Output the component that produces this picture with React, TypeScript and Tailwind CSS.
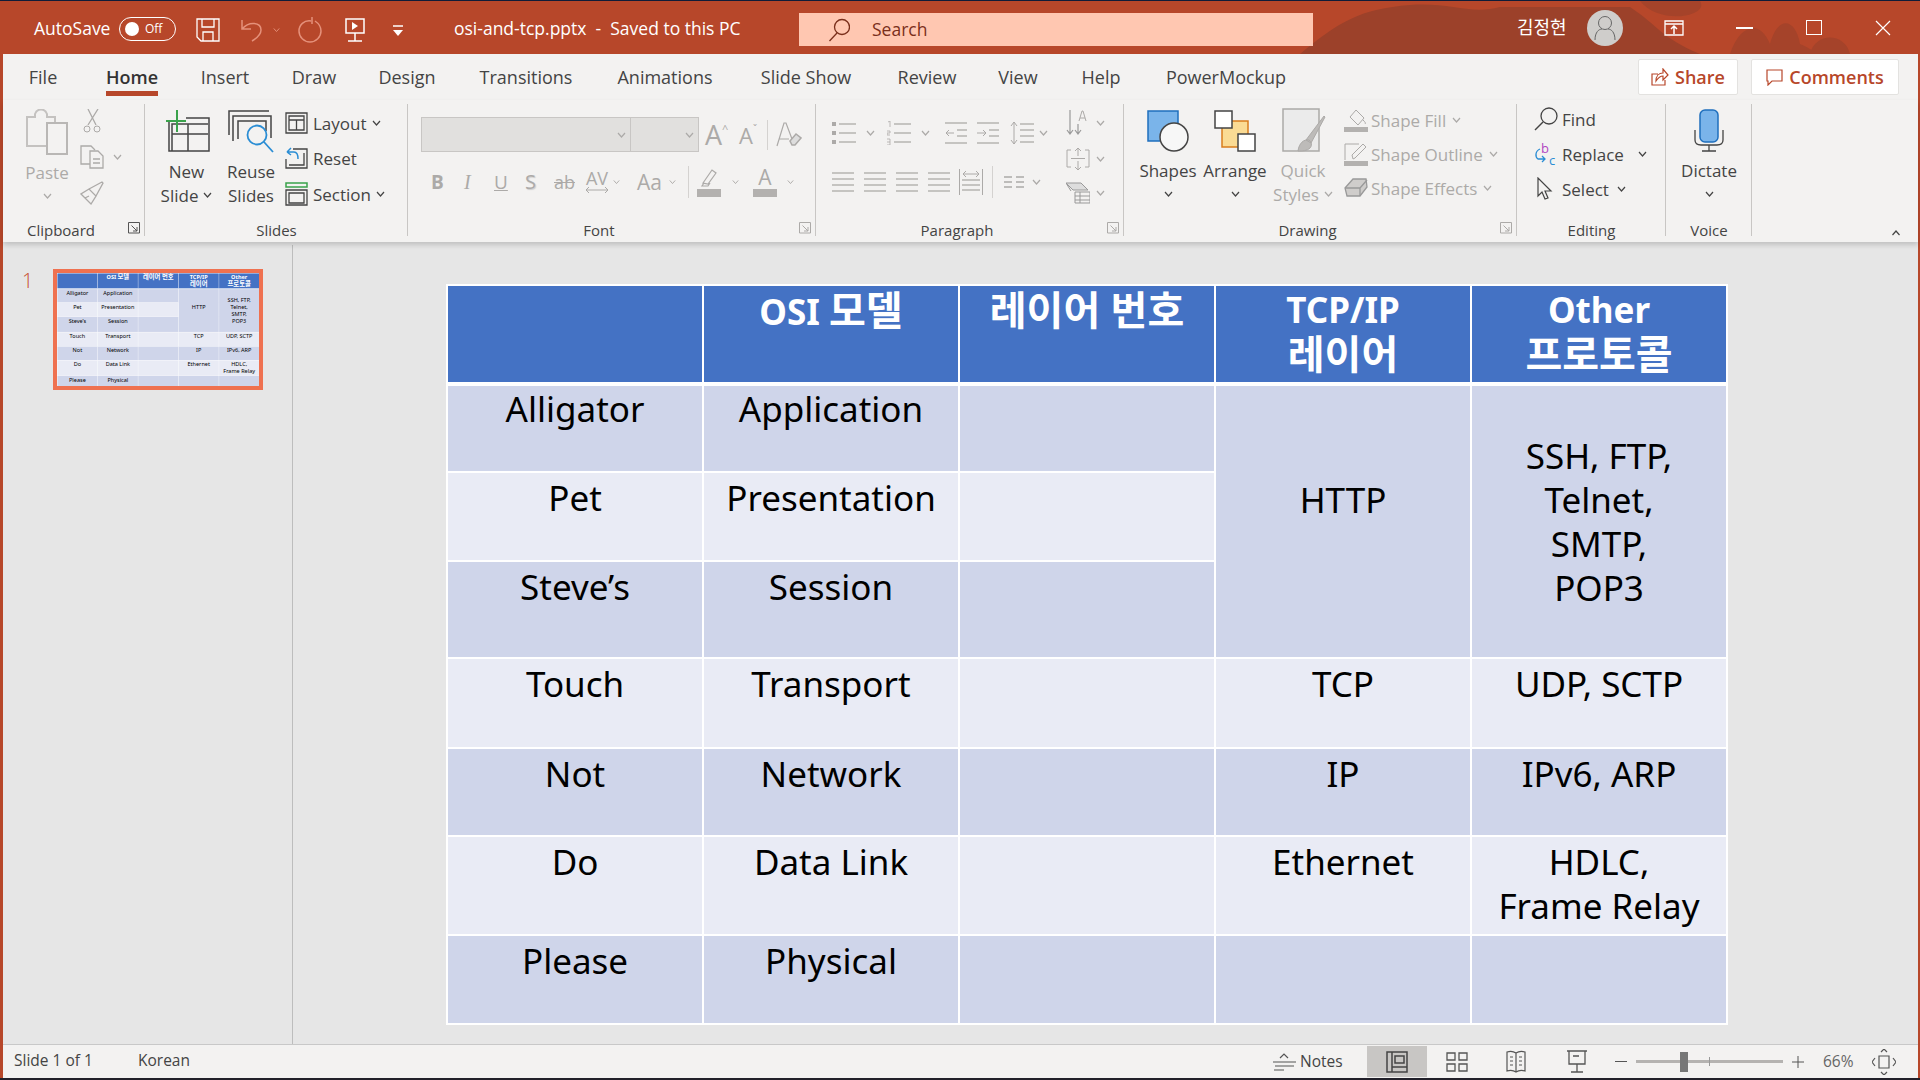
import type { ReactNode } from 'react';

const UI = "font-['Open_Sans','Noto_Sans_CJK_KR',sans-serif]";
const OFF = '#acaaa8';
const ON = '#444444';

function Chev({ c = ON, w = 9, up = false }: { c?: string; w?: number; up?: boolean }) {
  return (
    <svg width={w} height="6" viewBox="0 0 9 6" fill="none" stroke={c} strokeWidth="1.2" className="shrink-0">
      <path d={up ? 'M1 5l3.5-4L8 5' : 'M1 1l3.5 4L8 1'} />
    </svg>
  );
}

function Ico({ w, h, children, className = '' }: { w: number; h: number; children: ReactNode; className?: string }) {
  return (
    <svg width={w} height={h} viewBox={`0 0 ${w} ${h}`} fill="none" className={`shrink-0 ${className}`}>
      {children}
    </svg>
  );
}

// big ribbon button: icon on top, up to two lines of text, chevron inline or on own line
function Big({ icon, lines, w, off = false, inlineChev = false }: { icon: ReactNode; lines: string[]; w: string; off?: boolean; inlineChev?: boolean }) {
  const c = off ? OFF : ON;
  return (
    <div className={`flex flex-col items-center shrink-0 ${w}`}>
      <div className="h-[54px] flex items-center justify-center">{icon}</div>
      {lines.map((l, i) => (
        <div key={l} className="h-[24px] flex items-center gap-[5px] whitespace-nowrap" style={{ color: c }}>
          {l}
          {inlineChev && i === lines.length - 1 && <Chev c={c} />}
        </div>
      ))}
      {!inlineChev && lines.length === 1 && (
        <div className="h-[24px] flex items-center"><Chev c={c} /></div>
      )}
    </div>
  );
}

function Launcher({ off = false }: { off?: boolean }) {
  const c = off ? OFF : '#555';
  return (
    <Ico w={12} h={12}>
      <path d="M.5 11V.5H11.500V11H.5" stroke={c} />
      <path d="M3.500 3.500L9 9M5 9h4V5" stroke={c} />
    </Ico>
  );
}

function Group({ w, label, launcher, launcherOff, children, last }: { w: string; label: string; launcher?: boolean; launcherOff?: boolean; children: ReactNode; last?: boolean }) {
  return (
    <div className={`relative shrink-0 flex flex-col h-[142px] ${w}`}>
      <div className="h-[118px] flex">{children}</div>
      <div className="flex items-center h-[24px] text-[#444] text-[15px]">
        <div className={`flex-1 text-center ${launcher ? 'pr-[26px]' : ''}`}>{label}</div>
      </div>
      {launcher && (
        <div className="absolute right-[5px] bottom-[8px]"><Launcher off={launcherOff} /></div>
      )}
      {!last && <div className="absolute right-0 top-[4px] bottom-[6px] w-px bg-[#c8c6c4]" />}
    </div>
  );
}

const rows: { cells: (string | null)[]; band: string; h: string }[] = [
  { cells: ['Alligator', 'Application', '', 'HTTP', 'SSH'], band: 'bg-[#cfd5ea]', h: 'h-[88px]' },
  { cells: ['Pet', 'Presentation', '', null, null], band: 'bg-[#e9ebf5]', h: 'h-[89px]' },
  { cells: ['Steve’s', 'Session', '', null, null], band: 'bg-[#cfd5ea]', h: 'h-[97px]' },
  { cells: ['Touch', 'Transport', '', 'TCP', 'UDP, SCTP'], band: 'bg-[#e9ebf5]', h: 'h-[90px]' },
  { cells: ['Not', 'Network', '', 'IP', 'IPv6, ARP'], band: 'bg-[#cfd5ea]', h: 'h-[88px]' },
  { cells: ['Do', 'Data Link', '', 'Ethernet', 'HDLC,|Frame Relay'], band: 'bg-[#e9ebf5]', h: 'h-[99px]' },
  { cells: ['Please', 'Physical', '', '', ''], band: 'bg-[#cfd5ea]', h: 'h-[89px]' },
];

function Ko({ children }: { children: ReactNode }) {
  return <span className="text-[40px]">{children}</span>;
}

function SlideTable() {
  const th = 'w-[256px] border-2 border-b-4 border-white bg-[#4472c4] align-top pt-[2px] font-bold text-white';
  return (
    <table className="table-fixed border-collapse w-[1280px] text-center text-[35px] leading-[44px] font-['Noto_Sans','Noto_Sans_CJK_KR',sans-serif]">
      <thead>
        <tr className="h-[99px]">
          <th className={th}></th>
          <th className={th}>OSI <Ko>모델</Ko></th>
          <th className={th}><Ko>레이어 번호</Ko></th>
          <th className={th}>TCP/IP<br /><Ko>레이어</Ko></th>
          <th className={th}>Other<br /><Ko>프로토콜</Ko></th>
        </tr>
      </thead>
      <tbody>
        {rows.map((r, i) => (
          <tr key={i} className={r.h}>
            {r.cells.map((c, j) => {
              if (c === null) return null;
              if (i === 0 && j === 3)
                return <td key={j} rowSpan={3} className="border-2 border-white bg-[#cfd5ea] align-middle text-black">HTTP<br />&nbsp;</td>;
              if (i === 0 && j === 4)
                return <td key={j} rowSpan={3} className="border-2 border-white bg-[#cfd5ea] align-middle text-black">SSH, FTP,<br />Telnet,<br />SMTP,<br />POP3</td>;
              return (
                <td key={j} className={`border-2 border-white align-top text-black ${i === 0 ? 'pt-[1px]' : 'pt-[3px]'} ${r.band}`}>
                  {c.split('|').map((t, k) => (k ? <span key={k}><br />{t}</span> : <span key={k}>{t}</span>))}
                </td>
              );
            })}
          </tr>
        ))}
      </tbody>
    </table>
  );
}

function SmallRow({ icon, label, off, chev, gap = 'gap-[5px]', chevGap = 'ml-0' }: { icon: ReactNode; label: string; off?: boolean; chev?: boolean; gap?: string; chevGap?: string }) {
  const c = off ? OFF : ON;
  return (
    <div className={`flex items-center whitespace-nowrap ${gap}`} style={{ color: c }}>
      {icon}
      <span>{label}</span>
      {chev && <span className={chevGap}><Chev c={c} /></span>}
    </div>
  );
}

function Lines({ x, ys, w, c = OFF }: { x: number; ys: number[]; w: number; c?: string }) {
  return (
    <>
      {ys.map((y) => (
        <path key={y} d={`M${x} ${y}h${w}`} stroke={c} strokeWidth="1.300" />
      ))}
    </>
  );
}

const tabs = [
  ['File', 'w-[58px] ml-[11px]'],
  ['Home', 'w-[120px]'],
  ['Insert', 'w-[66px]'],
  ['Draw', 'w-[112px]'],
  ['Design', 'w-[74px]'],
  ['Transitions', 'w-[164px]'],
  ['Animations', 'w-[114px]'],
  ['Slide Show', 'w-[168px]'],
  ['Review', 'w-[74px]'],
  ['View', 'w-[108px]'],
  ['Help', 'w-[58px]'],
  ['PowerMockup', 'w-[192px]'],
];

export default function App() {
  return (
    <div className={`w-screen h-screen overflow-hidden flex flex-col bg-[#b7472a] border-t border-[#101c38] ${UI}`}>
      {/* title bar */}
      <div className="relative h-[53px] shrink-0 flex items-center bg-[#b7472a] text-white text-[17.500px] pl-[34px] pt-[4px]">
        <svg className="absolute right-0 top-0" width="620" height="53" viewBox="0 0 620 53">
          <path d="M0 53C40 20 60 8 110 4c40-3 60 10 90 2h130c30 20 30 30 70 47z" fill="#9c412a" />
          <path d="M430 53c10-30 30-35 40-10 8-30 26-25 30 0 10 4 14 8 18 10zM510 53c5-22 35-22 40 0zM340 0h60c10 15-40 25-60 0z" fill="#a5432a" />
        </svg>
        <span className="relative w-[85px] whitespace-nowrap -mt-[2px]">AutoSave</span>
        <div className="relative w-[57px] h-[24px] rounded-full border border-white flex items-center pl-[5px] gap-[6px] text-[12px] -mt-[2px]">
          <span className="w-[14px] h-[14px] rounded-full bg-white"></span>Off
        </div>
        <Ico w={24} h={24} className="relative ml-[20px]">
          <path d="M1 1h22v22H5l-4-4zM6 1v8h12V1M7 23v-9h10v9" stroke="#fff" strokeWidth="1.300" />
        </Ico>
        <Ico w={24} h={24} className="relative ml-[20px]">
          <path d="M2 2v9h9M2 11C9 3 21 4 21 12c0 5-4 8-9 11" stroke="#e5917b" strokeWidth="1.500" />
        </Ico>
        <span className="relative ml-[9px]"><Chev c="#e5917b" w={7} /></span>
        <Ico w={24} h={26} className="relative ml-[18px]">
          <path d="M13 4C6 3 1 8 1 14c0 6 5 11 11 11s11-5 11-11c0-5-3-8-6-10M14 0v7" stroke="#e5917b" strokeWidth="1.500" />
        </Ico>
        <Ico w={24} h={24} className="relative ml-[21px]">
          <path d="M3 1h18v14H3zM12 15v8M5 23h14" stroke="#fff" strokeWidth="1.500" />
          <path d="M9 4l6 4-6 4z" fill="#fff" />
        </Ico>
        <Ico w={14} h={14} className="relative ml-[24px]">
          <path d="M2 3h10" stroke="#fff" strokeWidth="1.500" />
          <path d="M2 7h10l-5 6z" fill="#fff" />
        </Ico>
        <span className="relative ml-[49px] w-[345px] whitespace-nowrap -mt-[2px]">osi-and-tcp.pptx&nbsp; -&nbsp; Saved to this PC</span>
        <div className="relative h-[33px] w-[514px] bg-[#ffc7b1] flex items-center pl-[29px] text-[#7a2f1b]">
          <Ico w={22} h={24}>
            <circle cx="14" cy="9" r="7.500" stroke="#7a2f1b" strokeWidth="1.300" />
            <path d="M9 15L1.500 23" stroke="#7a2f1b" strokeWidth="1.300" />
          </Ico>
          <span className="ml-[22px]">Search</span>
        </div>
        <span className="relative ml-[204px] w-[62px] whitespace-nowrap text-[18px] -mt-[4px]">김정현</span>
        <div className="relative w-[36px] h-[36px] rounded-full bg-[#cfcdcb] flex items-center justify-center ml-[8px] -mt-[4px]">
          <Ico w={22} h={26}>
            <circle cx="11" cy="8" r="6.500" stroke="#666" />
            <path d="M1 25c0-8 4-11 7-11M21 25c0-8-4-11-7-11" stroke="#666" />
          </Ico>
        </div>
        <Ico w={20} h={16} className="relative ml-[41px] -mt-[4px]">
          <path d="M1 1h18v14H1zM1 4h18" stroke="#fff" strokeWidth="1.300" />
          <path d="M10 14V7M7 9l3-3 3 3" stroke="#fff" strokeWidth="1.500" />
        </Ico>
        <div className="relative ml-[52px] w-[17px] h-[2px] bg-white -mt-[4px]"></div>
        <div className="relative ml-[53px] w-[16px] h-[15px] border border-white -mt-[4px]"></div>
        <Ico w={16} h={16} className="relative ml-[53px] -mt-[4px]">
          <path d="M1 1l14 14M15 1L1 15" stroke="#fff" strokeWidth="1.200" />
        </Ico>
      </div>

      <div className="flex-1 min-h-0 flex flex-col ml-[3px] mr-[2px]">
        {/* tab row */}
        <div className="h-[46px] shrink-0 bg-[#f3f2f1] flex items-center text-[#444] text-[18px]">
          {tabs.map(([t, w]) => (
            <div key={t} className={`h-full flex items-center justify-center shrink-0 whitespace-nowrap ${w}`}>
              {t === 'Home' ? (
                <span className="relative h-full flex items-center font-semibold text-[#333]">
                  Home
                  <span className="absolute left-0 right-0 bottom-[4px] h-[5px] bg-[#b7472a]"></span>
                </span>
              ) : t}
            </div>
          ))}
          <div className="ml-auto flex items-center gap-[13px] mr-[19px]">
            <div className="w-[100px] h-[36px] bg-white border border-[#e3e2e0] rounded-[2px] flex items-center justify-center gap-[6px] text-[#b7472a] font-semibold">
              <Ico w={18} h={18}>
                <path d="M7 6H1v11h13v-5M5 13c0-5 3-8 7-8V1l5 6-5 5V8c-3 0-5 2-7 5z" stroke="#b7472a" strokeWidth="1.200" />
              </Ico>
              Share
            </div>
            <div className="w-[148px] h-[36px] bg-white border border-[#e3e2e0] rounded-[2px] flex items-center justify-center gap-[6px] text-[#b7472a] font-semibold">
              <Ico w={17} h={17}>
                <path d="M1 1h15v11H6l-4 4v-4H1z" stroke="#b7472a" strokeWidth="1.200" />
              </Ico>
              Comments
            </div>
          </div>
        </div>

        {/* ribbon */}
        <div className="relative z-10 h-[142px] shrink-0 bg-[#f3f2f1] flex text-[17px] leading-none shadow-[0_3px_5px_rgba(0,0,0,0.16)]">
          <Group w="w-[142px]" label="Clipboard" launcher>
            <div className="pl-[22px] pt-[9px] flex">
              <div className="w-[44px] flex flex-col items-center" style={{ color: OFF }}>
                <Ico w={42} h={46}>
                  <path d="M22 37H1V8h8V5c2-6 10-6 12 0v3h8v7" stroke="#c4c2c0" strokeWidth="2" />
                  <path d="M21 14h20v31H21z" fill="#f3f2f1" stroke="#b9b7b5" strokeWidth="2" />
                </Ico>
                <div className="h-[24px] mt-[5px] flex items-center">Paste</div>
                <div className="h-[24px] flex items-center"><Chev c={OFF} /></div>
              </div>
              <div className="ml-[11px] flex flex-col gap-[12px]">
                <Ico w={24} h={24}>
                  <path d="M8 0l8 16M18 0L8 16" stroke={OFF} strokeWidth="1.300" />
                  <circle cx="7" cy="20" r="3" stroke={OFF} /><circle cx="17" cy="20" r="3" stroke={OFF} />
                </Ico>
                <div className="flex items-center gap-[9px]">
                  <Ico w={24} h={24}>
                    <path d="M10 19H1V1h10l4 4" stroke={OFF} strokeWidth="1.300" />
                    <path d="M10 6h8l5 5v12H10zM13 14h7M13 18h7" stroke={OFF} strokeWidth="1.300" />
                  </Ico>
                  <Chev c={OFF} />
                </div>
                <Ico w={24} h={24}>
                  <path d="M1 13l10 10 5-8-7-7zM9 8l13-7 1 1-7 13M5 17l4-2" stroke={OFF} strokeWidth="1.300" />
                </Ico>
              </div>
            </div>
          </Group>

          <Group w="w-[263px]" label="Slides">
            <div className="pl-[18px] pt-[5px] flex">
              <Big
                w="w-[47px]"
                lines={['New', 'Slide']}
                inlineChev
                icon={
                  <Ico w={46} h={44}>
                    <path d="M5 12v29h40V8H22M8 41V14h36M24 14v27M8 24h36" stroke="#444" strokeWidth="1.500" />
                    <path d="M13 0v22M2 11h20" stroke="#3aa24b" strokeWidth="2" />
                  </Ico>
                }
              />
              <div className="ml-[18px]">
                <Big
                  w="w-[46px]"
                  lines={['Reuse', 'Slides']}
                  icon={
                    <Ico w={46} h={46}>
                      <path d="M1 26V2h40M5 32V7h38v22M10 30V12h28v10" stroke="#444" strokeWidth="1.500" />
                      <circle cx="29" cy="26" r="9.500" fill="#f3f2f1" stroke="#2a8dd4" strokeWidth="1.800" />
                      <path d="M36 33l9 10" stroke="#2a8dd4" strokeWidth="1.800" />
                    </Ico>
                  }
                />
              </div>
              <div className="ml-[11px] pt-[7px] flex flex-col gap-[13px]">
                <SmallRow chev label="Layout" icon={
                  <Ico w={23} h={22}><path d="M1 1h21v20H1zM4 4h15v14H4zM4 8h15M11.500 8v10" stroke="#444" strokeWidth="1.300" /></Ico>
                } />
                <SmallRow label="Reset" icon={
                  <Ico w={23} h={22}>
                    <path d="M8 2h14v19H1v-9M4 18h15V6" stroke="#444" strokeWidth="1.300" />
                    <path d="M2 5l4-4M2 5l4 3M2 5h7c3 0 4 2 4 7" stroke="#2a8dd4" strokeWidth="1.500" />
                  </Ico>
                } />
                <SmallRow chev label="Section" icon={
                  <Ico w={23} h={24}>
                    <path d="M1 1h21v4H1z" stroke="#3aa24b" strokeWidth="1.500" />
                    <path d="M1 8h21v15H1zM4 11h15v10H4z" stroke="#444" strokeWidth="1.300" />
                  </Ico>
                } />
              </div>
            </div>
          </Group>

          <Group w="w-[408px]" label="Font" launcher launcherOff>
            <div className="pl-[13px] pt-[17px] flex flex-col">
              <div className="flex items-center h-[35px]">
                <div className="w-[210px] h-[35px] bg-[#e1e0de] border border-[#c8c6c4] flex items-center justify-end pr-[4px]"><Chev c={OFF} /></div>
                <div className="w-[68px] h-[35px] bg-[#e1e0de] border border-[#c8c6c4] border-l-0 flex items-center justify-end pr-[4px]"><Chev c={OFF} /></div>
                <div className="flex items-start text-[27px] ml-[6px] w-[34px]" style={{ color: OFF }}>A<span className="text-[11px] mt-[2px]">^</span></div>
                <div className="flex items-start text-[22px] w-[28px]" style={{ color: OFF }}>A<span className="text-[10px]">ˇ</span></div>
                <div className="w-px h-[30px] bg-[#d4d2d0]"></div>
                <Ico w={26} h={26} className="ml-[8px]">
                  <path d="M1 24L8 1h2l6 16M3 17h10" stroke={OFF} strokeWidth="1.200" />
                  <path d="M14 19l6-7 5 4-6 7h-3z" stroke={OFF} strokeWidth="1.500" fill="#ddd" />
                </Ico>
              </div>
              <div className="flex items-center h-[26px] mt-[17px]" style={{ color: OFF }}>
                <span className="w-[40px] pl-[10px] font-bold text-[19px]">B</span>
                <span className="w-[33px] pl-[3px] italic font-['Liberation_Serif',serif] text-[20px]">I</span>
                <span className="w-[31px] underline text-[19px]">U</span>
                <span className="w-[29px] text-[20px] [text-shadow:1px_1px_1px_#ccc]">S</span>
                <span className="w-[29px] line-through text-[18px]">ab</span>
                <span className="flex flex-col items-center w-[28px] text-[18px] leading-[16px]">
                  AV
                  <Ico w={24} h={8}><path d="M1 4h22M1 4l3-3M1 4l3 3M23 4l-3-3M23 4l-3 3" stroke={OFF} /></Ico>
                </span>
                <span className="ml-[2px] w-[24px]"><Chev c={OFF} w={7} /></span>
                <span className="text-[21px] w-[32px]">Aa</span>
                <Chev c={OFF} w={7} />
                <div className="w-px h-[32px] bg-[#d4d2d0] ml-[12px]"></div>
                <div className="ml-[8px] flex flex-col items-center w-[24px] gap-[2px]">
                  <Ico w={20} h={19}><path d="M5 15l-2 3h6l2-3M4 15L13 2l4 3-8 11z" stroke={OFF} strokeWidth="1.200" /></Ico>
                  <div className="w-[24px] h-[8px] bg-[#b3b1af]"></div>
                </div>
                <span className="ml-[11px]"><Chev c={OFF} w={7} /></span>
                <div className="ml-[14px] flex flex-col items-center w-[24px]">
                  <span className="text-[21px] leading-[19px]">A</span>
                  <div className="w-[24px] h-[8px] bg-[#b3b1af] mt-[2px]"></div>
                </div>
                <span className="ml-[10px]"><Chev c={OFF} w={7} /></span>
              </div>
            </div>
          </Group>

          <Group w="w-[308px]" label="Paragraph" launcher launcherOff>
            <div className="pl-[16px] pt-[20px] flex flex-col">
              <div className="flex items-center h-[26px]">
                <Ico w={24} h={24}>
                  <Lines x={7} ys={[3, 12, 21]} w={17} />
                  <path d="M0 1h4v4H0zM0 10h4v4H0zM0 19h4v4H0z" fill={OFF} />
                </Ico>
                <span className="ml-[10px]"><Chev c={OFF} /></span>
                <Ico w={24} h={24} className="ml-[12px]">
                  <Lines x={7} ys={[3, 12, 21]} w={17} />
                  <path d="M1 1l2-1v6M0 10h3v2H0v2h3M0 18h3v6H0M0 21h3" stroke={OFF} strokeWidth=".8" />
                </Ico>
                <span className="ml-[10px]"><Chev c={OFF} /></span>
                <Ico w={24} h={24} className="ml-[14px]">
                  <Lines x={1} ys={[2, 22]} w={22} />
                  <Lines x={13} ys={[9, 15]} w={10} />
                  <path d="M10 12H2M5 9l-3 3 3 3" stroke={OFF} />
                </Ico>
                <Ico w={24} h={24} className="ml-[8px]">
                  <Lines x={1} ys={[2, 22]} w={22} />
                  <Lines x={13} ys={[9, 15]} w={10} />
                  <path d="M1 12h9M7 9l3 3-3 3" stroke={OFF} />
                </Ico>
                <Ico w={24} h={24} className="ml-[10px]">
                  <Lines x={10} ys={[3, 9, 15, 21]} w={14} />
                  <path d="M4 1v22M1 5l3-4 3 4M1 19l3 4 3-4" stroke={OFF} />
                </Ico>
                <span className="ml-[5px]"><Chev c={OFF} /></span>
              </div>
              <div className="flex items-center h-[24px] mt-[24px]">
                <Ico w={22} h={22}><Lines x={0} ys={[2, 8, 14, 20]} w={22} /></Ico>
                <Ico w={22} h={22} className="ml-[10px]"><Lines x={0} ys={[2, 8, 14, 20]} w={22} /></Ico>
                <Ico w={22} h={22} className="ml-[10px]"><Lines x={0} ys={[2, 8, 14, 20]} w={22} /></Ico>
                <Ico w={22} h={22} className="ml-[10px]"><Lines x={0} ys={[2, 8, 14, 20]} w={22} /></Ico>
                <Ico w={24} h={26} className="ml-[9px]">
                  <path d="M.5 0v26M23.500 0v26M4 5h16M4 5l3-3M4 5l3 3M20 5l-3-3M20 5l-3 3" stroke={OFF} />
                  <Lines x={3} ys={[11, 16, 21]} w={18} />
                </Ico>
                <div className="w-px h-[32px] bg-[#d4d2d0] ml-[9px]"></div>
                <Ico w={20} h={14} className="ml-[11px]">
                  <path d="M0 2h8M12 2h8M0 7h8M12 7h8M0 12h8M12 12h8" stroke={OFF} strokeWidth="1.300" />
                </Ico>
                <span className="ml-[8px]"><Chev c={OFF} /></span>
              </div>
            </div>
            <div className="ml-[18px] pt-[10px] flex flex-col gap-[11px]">
              <div className="flex items-center gap-[6px]">
                <Ico w={24} h={26}>
                  <path d="M4 0v24M1 20l3 4 3-4M12 14v10M9 20l3 4 3-4" stroke="#999" strokeWidth="1.200" />
                  <path d="M13 11l3-10h1l3 10M14 8h5" stroke={OFF} />
                </Ico>
                <Chev c={OFF} />
              </div>
              <div className="flex items-center gap-[6px]">
                <Ico w={24} h={24}>
                  <path d="M5 3H1v17h4M19 3h4v17h-4M5 11.500h14M12 1v8M9 4l3-3 3 3M12 14v9M9 20l3 3 3-3" stroke={OFF} />
                </Ico>
                <Chev c={OFF} />
              </div>
              <div className="flex items-center gap-[6px]">
                <Ico w={24} h={22}>
                  <path d="M0 1h15l7 7H7zM0 1l5 8" stroke="#999" fill="#ddd" />
                  <path d="M9 10h15v11H9zM9 14h15M9 18h15M14 10v11" stroke="#999" />
                </Ico>
                <Chev c={OFF} />
              </div>
            </div>
          </Group>

          <Group w="w-[393px]" label="Drawing" launcher launcherOff>
            <div className="pl-[19px] pt-[4px] flex">
              <Big
                w="w-[50px]"
                lines={['Shapes']}
                icon={
                  <Ico w={42} h={42}>
                    <path d="M1 1h30v30H1z" fill="#7ab4ea" stroke="#1f6fbd" strokeWidth="1.500" />
                    <circle cx="27" cy="27" r="14" fill="#f7f7f7" stroke="#444" strokeWidth="1.500" />
                  </Ico>
                }
              />
              <div className="ml-[17px]">
                <Big
                  w="w-[50px]"
                  lines={['Arrange']}
                  icon={
                    <Ico w={42} h={42}>
                      <path d="M8 11h26v26H8z" fill="#fadb94" stroke="#d97d1c" strokeWidth="1.500" />
                      <path d="M1 1h17v17H1zM24 24h17v17H24z" fill="#fff" stroke="#444" strokeWidth="1.500" />
                    </Ico>
                  }
                />
              </div>
              <div className="ml-[20px]">
                <Big
                  w="w-[46px]"
                  off
                  inlineChev
                  lines={['Quick', 'Styles']}
                  icon={
                    <Ico w={46} h={46}>
                      <path d="M3 1h36v42H3z" fill="#ebebeb" stroke={OFF} strokeWidth="1.500" />
                      <path d="M26 32L44 8l1 1-14 26zM18 43c1-8 6-12 11-11 3 2 3 6 1 8-3 3-8 3-12 3z" fill="#bdbbb9" stroke={OFF} />
                    </Ico>
                  }
                />
              </div>
              <div className="ml-[18px] pt-[4px] flex flex-col gap-[10px]">
                <SmallRow off chev gap="gap-[3px]" chevGap="ml-[3px]" label="Shape Fill" icon={
                  <Ico w={24} h={24}>
                    <path d="M6 9l6-7 8 8-6 7zM19 12c2 2 3 3 2 4" stroke={OFF} />
                    <path d="M0 19h24v5H0z" fill="#b3b1af" />
                  </Ico>
                } />
                <SmallRow off chev gap="gap-[3px]" chevGap="ml-[3px]" label="Shape Outline" icon={
                  <Ico w={24} h={24}>
                    <path d="M1 18V2h14M9 17l-1-4L19 2l3 3L11 16z" stroke={OFF} />
                    <path d="M0 19h24v5H0z" fill="#b3b1af" />
                  </Ico>
                } />
                <SmallRow off chev gap="gap-[3px]" chevGap="ml-[3px]" label="Shape Effects" icon={
                  <Ico w={24} h={24}>
                    <path d="M1 12L9 3h13l1 8-7 9H3z" fill="#cfcdcb" stroke="#999" strokeWidth="1.300" />
                    <path d="M1 12h15v8M16 12l7-8" stroke="#999" strokeWidth="1.300" />
                  </Ico>
                } />
              </div>
            </div>
          </Group>

          <Group w="w-[149px]" label="Editing">
            <div className="pl-[16px] pt-[7px] flex flex-col gap-[11px] text-[#444]">
              <SmallRow gap="gap-[3px]" label="Find" icon={
                <Ico w={26} h={24}>
                  <circle cx="16" cy="9" r="8" stroke="#444" strokeWidth="1.300" />
                  <path d="M10 15l-8 8" stroke="#444" strokeWidth="1.500" />
                </Ico>
              } />
              <SmallRow chev gap="gap-[5px]" chevGap="ml-[9px]" label="Replace" icon={
                <Ico w={24} h={24}>
                  <text x="8" y="11" fontSize="13" fill="#b146c2">b</text>
                  <text x="16" y="23" fontSize="13" fill="#2a8dd4">c</text>
                  <path d="M7 7C2 9 2 15 5 17h7M9 14l3 3-3 3" stroke="#2a8dd4" strokeWidth="1.300" />
                </Ico>
              } />
              <SmallRow chev gap="gap-[8px]" label="Select" icon={
                <Ico w={21} h={24}>
                  <path d="M5 1v18l4-4 3 7 3-1-3-7h6z" stroke="#444" strokeWidth="1.200" />
                </Ico>
              } />
            </div>
          </Group>

          <Group w="w-[86px]" label="Voice">
            <div className="w-full pt-[4px] flex justify-center">
              <Big
                w="w-[60px]"
                lines={['Dictate']}
                icon={
                  <Ico w={30} h={44}>
                    <path d="M6 6a5 5 0 0 1 5-5h8a5 5 0 0 1 5 5v22a5 5 0 0 1-5 5h-8a5 5 0 0 1-5-5z" fill="#7ab4ea" stroke="#1f6fbd" strokeWidth="1.500" />
                    <path d="M1 21v10c0 4 3 5 6 5h16c3 0 6-1 6-5V21M15 36v6M8 42h14" stroke="#444" strokeWidth="1.300" />
                  </Ico>
                }
              />
            </div>
          </Group>

          <div className="flex-1 flex items-end justify-end pb-[6px] pr-[16px]"><Chev up w={12} c="#444" /></div>
        </div>

        {/* workspace */}
        <div className="flex-1 min-h-0 flex bg-[#e6e6e6]">
          <div className="w-[290px] shrink-0 border-r border-[#bdbdbd] mt-[3px] flex items-start pl-[19px] pt-[24px]">
            <span className="w-[31px] text-[20px] leading-[24px] text-[#c8502f] font-light">1</span>
            <div className="w-[210px] h-[121px] border-[4px] border-[#ef7150] bg-white overflow-hidden">
              <div className="origin-top-left scale-[0.158]">
                <SlideTable />
              </div>
            </div>
          </div>
          <div className="flex-1 pl-[153px] pt-[42px]">
            <SlideTable />
          </div>
        </div>

        {/* status bar */}
        <div className="h-[34px] shrink-0 bg-[#f3f2f1] border-t border-[#c8c8c8] flex items-center text-[#444] text-[15.500px] pb-[2px]">
          <span className="ml-[11px] w-[124px] whitespace-nowrap">Slide 1 of 1</span>
          <span className="whitespace-nowrap">Korean</span>
          <div className="ml-auto flex items-center h-full -mb-[2px]">
            <Ico w={23} h={20}>
              <path d="M0 10h23M2 14h19M1 18h10M7 6l4-4 4 4" stroke="#555" strokeWidth="1.200" />
            </Ico>
            <span className="ml-[4px] w-[67px]">Notes</span>
            <div className="w-[60px] h-full bg-[#c8c6c4] flex items-center justify-center">
              <Ico w={22} h={22}><path d="M1 1h20v20H1zM6 1v20M6 16h15M9 5h9v7H9z" stroke="#444" strokeWidth="1.500" /></Ico>
            </div>
            <Ico w={22} h={20} className="ml-[19px]"><path d="M1 1h8v7H1zM13 1h8v7h-8zM1 12h8v7H1zM13 12h8v7h-8z" stroke="#555" strokeWidth="1.300" /></Ico>
            <Ico w={20} h={24} className="ml-[38px]"><path d="M1 2c3-1 6-1 9 1 3-2 6-2 9-1v19c-3-1-6-1-9 1-3-2-6-2-9-1zM10 3v19M4 7h3M4 11h3M4 15h3M13 7h3M13 11h3M13 15h3" stroke="#555" strokeWidth="1.200" /></Ico>
            <Ico w={20} h={24} className="ml-[41px]"><path d="M0 1h20M2 1v13h16V1M10 14v8M4 22h12M6 6h6" stroke="#555" strokeWidth="1.300" /></Ico>
            <div className="ml-[28px] w-[12px] h-px bg-[#555]"></div>
            <div className="relative ml-[9px] w-[147px] h-[3px] bg-[#b5b3b1]">
              <span className="absolute left-[44px] -top-[8px] w-[8px] h-[20px] bg-[#777]"></span>
              <span className="absolute left-[73px] -top-[3px] w-px h-[9px] bg-[#999]"></span>
            </div>
            <Ico w={12} h={12} className="ml-[9px]"><path d="M6 0v12M0 6h12" stroke="#555" /></Ico>
            <span className="ml-[19px] w-[49px] whitespace-nowrap text-[#666]">66%</span>
            <Ico w={24} h={26} className="mr-[22px]">
              <path d="M7 7h10v12H7zM3 9l-3 4 3 4M21 9l3 4-3 4M9 3l3-3 3 3M9 23l3 3 3-3" stroke="#555" strokeWidth="1.200" />
            </Ico>
          </div>
        </div>
      </div>
      <div className="h-[2px] shrink-0 bg-[#22202a]"></div>
    </div>
  );
}
